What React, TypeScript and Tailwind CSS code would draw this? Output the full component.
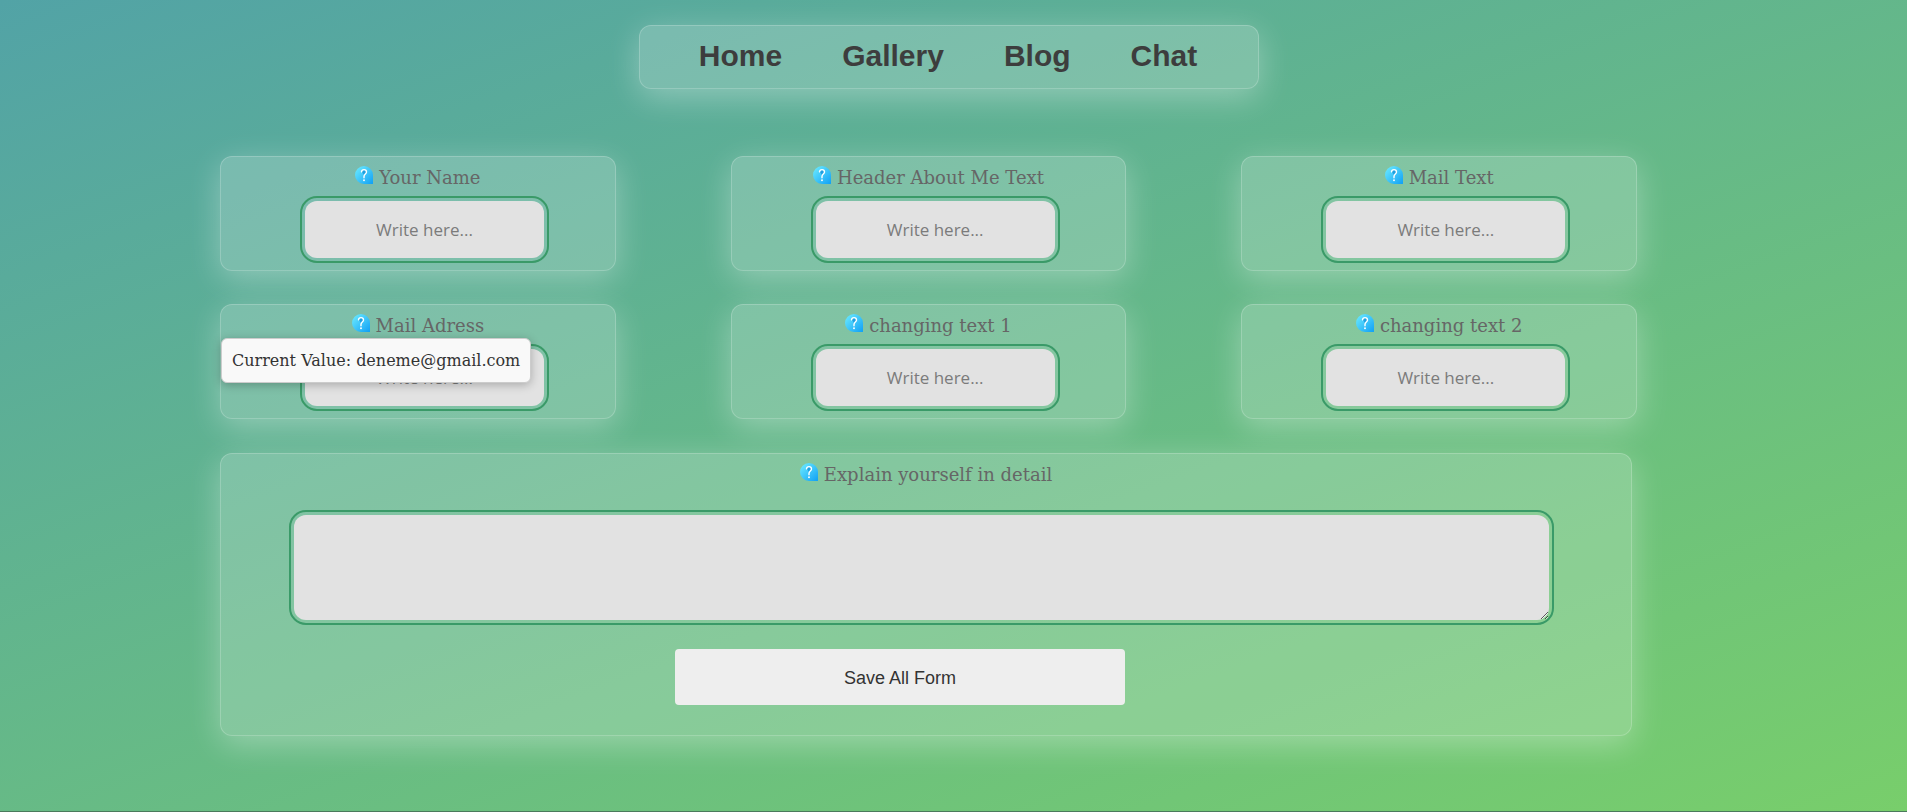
import React, { useId } from "react";

const glass =
  "rounded-xl border border-white/20 bg-white/20 shadow-[0_8px_32px_0_rgba(255,255,255,0.33)]";

const control =
  "rounded-xl bg-[#e2e2e2] outline-2 outline-offset-3 outline-[#3a9a68] font-['Open_Sans',sans-serif] text-[17px] text-[#333] placeholder:text-[#7b7b7b]";

function HelpIcon() {
  const fill = useId();
  return (
    <svg viewBox="0 0 18 18" className="size-[18px] shrink-0" aria-hidden="true">
      <defs>
        <linearGradient id={fill} x1="0" y1="0" x2="1" y2="1">
          <stop offset="0.1" stopColor="#66e6fe" />
          <stop offset="1" stopColor="#10a0f5" />
        </linearGradient>
      </defs>
      <path
        d="M9 0a9 9 0 1 0 0 18h8.400a.6.6 0 0 0 .6-.6V9a9 9 0 0 0-9-9Z"
        fill={`url(#${fill})`}
      />
      <path d="M7 6c.1-1.100 1-1.900 2-1.900s2 .8 2 1.900c0 1.400-1.300 1.800-2 2.900Z" fill="#1f9fe0" />
      <path
        d="M6.500 5.900c.1-1.500 1.200-2.300 2.500-2.300 1.500 0 2.500 1 2.500 2.300 0 2.100-2.500 2.200-2.500 4.600v1.200"
        fill="none"
        stroke="#fff"
        strokeWidth="1.400"
        strokeLinecap="round"
      />
      <circle cx="9" cy="14.200" r="0.950" fill="#fff" />
    </svg>
  );
}

function Caption({ id, children }: { id: string; children: string }) {
  return (
    <label
      htmlFor={id}
      className="flex h-8 items-center justify-center gap-1.5 font-['DejaVu_Serif',serif] text-[18px] text-[#666]"
    >
      <span className="pb-1">
        <HelpIcon />
      </span>
      {children}
    </label>
  );
}

function Field({ id, label, tip }: { id: string; label: string; tip?: string }) {
  return (
    <div className={`relative h-[115px] pt-1 ${glass}`}>
      <Caption id={id}>{label}</Caption>
      <input
        id={id}
        type="text"
        placeholder="Write here..."
        className={`ml-[84px] mt-2 block h-[57px] w-[239px] text-center ${control}`}
      />
      {tip && (
        <div
          role="tooltip"
          className="absolute left-0 top-[33px] flex h-[45px] items-center whitespace-nowrap rounded-md border border-[#ccc] bg-[#f9f9f9] px-2.5 font-['DejaVu_Serif',serif] text-base text-[#333] shadow-[0_2px_10px_rgba(0,0,0,0.25)]"
        >
          {tip}
        </div>
      )}
    </div>
  );
}

const links = ["Home", "Gallery", "Blog", "Chat"];

const fields = [
  { id: "name", label: "Your Name" },
  { id: "header", label: "Header About Me Text" },
  { id: "mail-text", label: "Mail Text" },
  { id: "mail", label: "Mail Adress", tip: "Current Value: deneme@gmail.com" },
  { id: "text-1", label: "changing text 1" },
  { id: "text-2", label: "changing text 2" },
];

export default function App() {
  return (
    <div className="min-h-screen border-b border-[#4b7a5c] bg-[linear-gradient(160deg,#52a3a6_0%,#78ce6b_100%)] pt-[25px]">
      <header className="flex justify-center pr-[9px]">
        <nav
          className={`flex h-16 w-[620px] items-center justify-center gap-[60px] pb-1 pr-0.5 font-['Liberation_Sans',sans-serif] text-[30px] font-bold text-[#3d3d3d] ${glass}`}
        >
          {links.map((link) => (
            <a key={link} href={`#${link.toLowerCase()}`}>
              {link}
            </a>
          ))}
        </nav>
      </header>

      <form className="ml-[220px] mr-[270px] mt-[67px]">
        <div className="grid grid-cols-3 gap-x-[115px] gap-y-[33px]">
          {fields.map((field) => (
            <Field key={field.id} {...field} />
          ))}
        </div>

        <section className={`mr-[5px] mt-[34px] pb-[30px] pt-1 ${glass}`}>
          <Caption id="about">Explain yourself in detail</Caption>
          <div className="pl-[73px] pr-[82px] pt-[25px]">
            <textarea id="about" className={`block h-[105px] w-full resize ${control}`} />
          </div>
          <button
            type="button"
            className="ml-[454px] mt-[29px] block h-14 w-[450px] rounded-[4px] bg-[#eee] pt-0.5 font-['Liberation_Sans',sans-serif] text-lg text-[#333]"
          >
            Save All Form
          </button>
        </section>
      </form>
    </div>
  );
}
